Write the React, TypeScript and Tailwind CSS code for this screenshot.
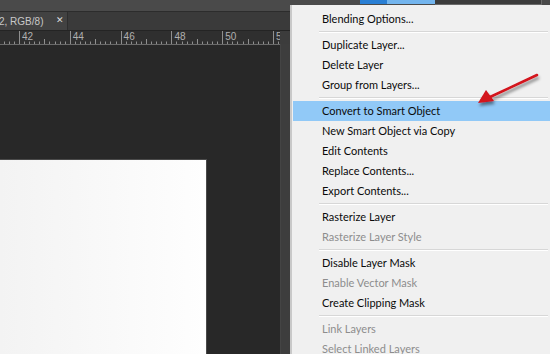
import React from "react";

type Item = { label: string; disabled?: boolean; active?: boolean } | "sep";

const items: Item[] = [
	{ label: "Blending Options..." },
	"sep",
	{ label: "Duplicate Layer..." },
	{ label: "Delete Layer" },
	{ label: "Group from Layers..." },
	"sep",
	{ label: "Convert to Smart Object", active: true },
	{ label: "New Smart Object via Copy" },
	{ label: "Edit Contents" },
	{ label: "Replace Contents..." },
	{ label: "Export Contents..." },
	"sep",
	{ label: "Rasterize Layer" },
	{ label: "Rasterize Layer Style", disabled: true },
	"sep",
	{ label: "Disable Layer Mask" },
	{ label: "Enable Vector Mask", disabled: true },
	{ label: "Create Clipping Mask" },
	"sep",
	{ label: "Link Layers", disabled: true },
	{ label: "Select Linked Layers", disabled: true },
];

const Ruler = () => {
	const start = 19;
	const unit = 25.4; // px per ruler unit
	const ticks = [];
	for (let i = -5; i < 65; i++) {
		const x = Math.round(start + (i * unit) / 5) + 0.5;
		if (x < 0 || x > 280) continue;
		const major = i % 10 === 0;
		const mid = i % 5 === 0;
		const h = major ? 13 : mid ? 5 : 2.5;
		ticks.push(<line key={i} x1={x} x2={x} y1={13 - h} y2={13} stroke="#8f8f8f" strokeWidth="1" />);
	}
	const labels = [42, 44, 46, 48, 50, 52];
	return (
		<svg width="280" height="14" className="block">
			{ticks}
			{labels.map((n, i) => (
				<text key={n} x={start + 3 + i * unit * 2} y="8.5" fontSize="10" fill="#b0b0b0" fontFamily="Liberation Sans, Arial, sans-serif">
					{n}
				</text>
			))}
			<line x1="0" x2="280" y1="13.5" y2="13.5" stroke="#6a6a6a" strokeWidth="1" />
		</svg>
	);
};

const ContextMenu = () => (
	<div className="absolute left-[290px] top-[5px] w-[260px] bottom-0 bg-[#f0f0f0] border-l-2 border-[#c9c9c9] pt-[4px] pl-[1px] font-['Lato',sans-serif] text-[11px]">
		{items.map((it, i) =>
			it === "sep" ? (
				<div key={i} className="h-[6px] flex items-center pl-[26px] pr-[2px]">
					<div className="h-[2px] w-full border-t border-[#d7d7d7] border-b border-b-white" />
				</div>
			) : (
				<div
					key={i}
					className={
						"h-[20px] flex items-center pl-[29px] whitespace-nowrap " +
						(it.active ? "bg-[#91c9f7] text-[#0a0a0a]" : it.disabled ? "text-[#8d8d8d]" : "text-[#0a0a0a]")
					}
				>
					{it.label}
				</div>
			)
		)}
	</div>
);

const Arrow = () => (
	<svg className="absolute left-[470px] top-[68px]" width="80" height="45" viewBox="0 0 80 45">
		<defs>
			<filter id="sh" x="-20%" y="-20%" width="140%" height="160%">
				<feDropShadow dx="1" dy="3" stdDeviation="1.6" floodColor="#000" floodOpacity="0.45" />
			</filter>
		</defs>
		<g filter="url(#sh)">
			<line x1="67" y1="7" x2="20" y2="29" stroke="#d3121b" strokeWidth="2.5" strokeLinecap="round" />
			<polygon points="8,35 16,22 24,33" fill="#d3121b" />
		</g>
	</svg>
);

export default function App() {
	return (
		<div className="relative w-[550px] h-[354px] overflow-hidden bg-[#282828] font-['Liberation_Sans',sans-serif]">
			{/* app bar */}
			<div className="h-[12px] bg-[#4a4a4a] border-b border-[#2c2c2c] flex items-start">
				<div className="ml-[360px] h-[4px] w-[27px] bg-[#2a7fd4]" />
				<div className="h-[4px] w-[48px] bg-[#73b5ee]" />
				<div className="h-[5px] w-[107px] bg-[#3c3c3c] border-b border-r border-[#6a6a6a]" />
			</div>
			{/* tab bar */}
			<div className="h-[18px] bg-[#3a3a3a] flex">
				<div className="w-[68px] bg-[#424242] border-r border-[#2e2e2e] flex items-center text-[10px] text-[#c8c8c8] whitespace-nowrap overflow-hidden">
					<span className="-ml-[1px]">2, RGB/8)</span>
					<span className="ml-[13px] text-[9px] text-[#dcdcdc]">✕</span>
				</div>
			</div>
			{/* ruler */}
			<div className="h-[14px] bg-[#2f2f2f] border-t border-[#242424] flex">
				<Ruler />
				<div className="w-[10px] bg-[#3c3c3c]" />
			</div>
			{/* canvas */}
			<div className="flex h-[310px]">
				<div className="w-[280px] pt-[115px]">
					<div className="w-[207px] h-full bg-gradient-to-r from-[#f3f3f3] to-[#fefefe] border-r border-t border-[#4a4a4a]" />
				</div>
				<div className="w-[10px] bg-[#3d3d3d] border-l border-[#444]" />
			</div>
			<ContextMenu />
			<Arrow />
		</div>
	);
}
